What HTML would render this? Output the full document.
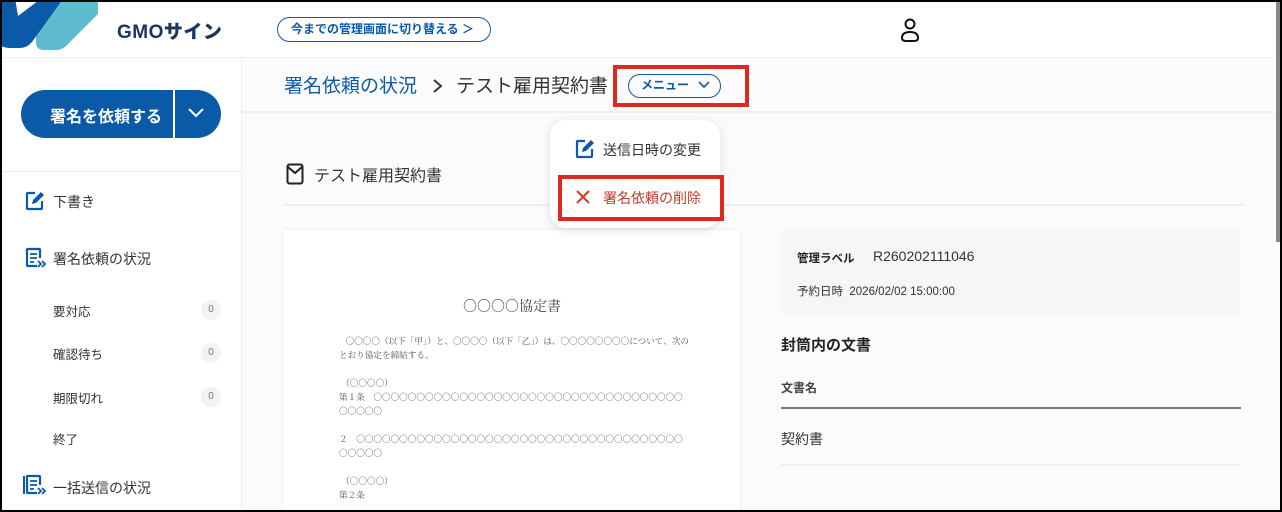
<!DOCTYPE html>
<html><head><meta charset="utf-8">
<style>
*{box-sizing:border-box;margin:0;padding:0}
body{width:1282px;height:512px;overflow:hidden;font-family:"Liberation Sans","Noto Sans CJK JP",sans-serif;background:#000;position:relative}
.frame{position:absolute;left:2px;top:2px;width:1278px;height:508px;background:#fbfbfd;overflow:hidden}
.hdr{position:absolute;left:0;top:0;width:1274px;height:56px;background:#fff;border-bottom:1px solid #f0f1f4}
.side{position:absolute;left:0;top:57px;width:240px;height:460px;background:#fff;border-right:1px solid #eceef2}
.abs{position:absolute}
.blue{color:#0b5aa8}
.pill{position:absolute;left:275px;top:15px;width:214px;height:25px;border:1.5px solid #0b5aa8;border-radius:13px;font-size:12px;color:#0b5aa8;font-weight:bold;line-height:22px;padding-left:13px}
.btn{position:absolute;left:19px;top:31px;width:200px;height:48px;background:#0b5aa8;border-radius:24px;color:#fff;font-weight:bold;font-size:16px}
.nav{position:absolute;font-size:14px;color:#333}
.sub{position:absolute;left:51px;font-size:12.5px;color:#333}
.cnt{position:absolute;left:199px;width:20px;height:20px;border-radius:10px;background:#f3f3f5;font-size:10px;color:#777;text-align:center;line-height:20px}
.bc{position:absolute;left:240px;top:57px;width:1034px;height:54px;border-bottom:2px solid #eef0f3;background:#fcfcfe}
.red{border:4px solid #e0291e;position:absolute}
.doc{font-family:"Noto Serif CJK JP","Noto Sans CJK JP",serif}
</style></head><body>
<div class="frame">
<div class="hdr">
 <svg class="abs" style="left:0;top:0" width="100" height="50" viewBox="0 0 100 50">
  <path d="M40 -10 L96 -10 L96 12 L64 44 Q60 48 54 48 L42 48 Q34 48 34 40 L34 0 Z" fill="#5fbbd0"/>
  <path d="M-5 -10 L12 -10 L16 14 L48 -10 L66 -10 L30 40 Q25 46 18 46 L8 46 Q-5 46 -5 34 Z" fill="#0b5aa8"/>
 </svg>
 <div class="abs" style="left:115px;top:15px;font-size:19px;font-weight:900;color:#1a3560;letter-spacing:0.5px">GMOサイン</div>
 <div class="pill">今までの管理画面に切り替える ＞</div>
 <svg class="abs" style="left:897px;top:15px" width="22" height="26" viewBox="0 0 22 26"><circle cx="11" cy="7" r="4.5" fill="none" stroke="#111" stroke-width="2"/><path d="M3 21 Q3 15 11 15 Q19 15 19 21 Q19 24 15 24 L7 24 Q3 24 3 21Z" fill="none" stroke="#111" stroke-width="2"/></svg>
</div>
<div class="side">
 <div class="btn"><span class="abs" style="left:29px;top:13px">署名を依頼する</span><div class="abs" style="left:152px;top:0;width:2px;height:48px;background:#fff"></div>
 <svg class="abs" style="left:166px;top:17px" width="18" height="12"><path d="M2 2 L9 9 L16 2" fill="none" stroke="#fff" stroke-width="2"/></svg></div>
 <div class="abs" style="left:0;top:112px;width:240px;height:1px;background:#eceef2"></div>
 <svg class="abs" style="left:22px;top:131px" width="22" height="22" viewBox="0 0 22 22"><path d="M11 3 H4 Q3 3 3 4 V18 Q3 19 4 19 H17 Q18 19 18 18 V11" fill="none" stroke="#0b5aa8" stroke-width="2.2"/><path d="M8 14 L9 10 L17 2 L20 5 L12 13 Z" fill="#0b5aa8"/></svg>
 <div class="nav" style="left:51px;top:133px">下書き</div>
 <svg class="abs" style="left:22px;top:187px" width="24" height="24" viewBox="0 0 24 24"><path d="M13 20 H4 Q3 20 3 19 V4 Q3 3 4 3 H15 Q16 3 16 4 V12" fill="none" stroke="#0b5aa8" stroke-width="2.2"/><path d="M6 8 H13 M6 12 H13 M6 16 H10 M14 15 L17 18 L14 21 M18 15 L21 18 L18 21" fill="none" stroke="#0b5aa8" stroke-width="1.8"/></svg>
 <div class="nav" style="left:51px;top:190px">署名依頼の状況</div>
 <div class="sub" style="top:242px">要対応</div><div class="cnt" style="top:241px">0</div>
 <div class="sub" style="top:285px">確認待ち</div><div class="cnt" style="top:284px">0</div>
 <div class="sub" style="top:329px">期限切れ</div><div class="cnt" style="top:328px">0</div>
 <div class="sub" style="top:370px">終了</div>
 <svg class="abs" style="left:20px;top:414px" width="26" height="24" viewBox="0 0 26 24"><path d="M2 3 V21" stroke="#0b5aa8" stroke-width="2"/><path d="M15 20 H6 Q5 20 5 19 V4 Q5 3 6 3 H17 Q18 3 18 4 V12" fill="none" stroke="#0b5aa8" stroke-width="2.2"/><path d="M8 8 H15 M8 12 H15 M8 16 H12 M16 15 L19 18 L16 21 M20 15 L23 18 L20 21" fill="none" stroke="#0b5aa8" stroke-width="1.8"/></svg>
 <div class="nav" style="left:51px;top:419px">一括送信の状況</div>
</div>
<div class="bc">
 <div class="abs blue" style="left:42px;top:12px;font-size:19px">署名依頼の状況</div>
 <svg class="abs" style="left:190px;top:19px" width="12" height="16"><path d="M2 2 L9 8 L2 14" fill="none" stroke="#333" stroke-width="2"/></svg>
 <div class="abs" style="left:214px;top:12px;font-size:19px;color:#333">テスト雇用契約書</div>
 <div class="abs" style="left:386px;top:15px;width:93px;height:24px;border:1.5px solid #0b5aa8;border-radius:12px;color:#0b5aa8;font-size:12px;font-weight:bold;line-height:21px;padding-left:12px">メニュー <svg width="12" height="8" style="margin-left:6px"><path d="M1 1 L6 6 L11 1" fill="none" stroke="#0b5aa8" stroke-width="1.6"/></svg></div>
</div>
<div class="red" style="left:611px;top:63px;width:136px;height:42px"></div>
<svg class="abs" style="left:284px;top:161px" width="18" height="22" viewBox="0 0 18 22"><rect x="1.5" y="1.5" width="15" height="19" rx="2" fill="none" stroke="#222" stroke-width="2"/><path d="M2 4 L9 10 L16 4" fill="none" stroke="#222" stroke-width="2"/></svg>
<div class="abs" style="left:312px;top:160px;font-size:16px;color:#333">テスト雇用契約書</div>
<div class="abs" style="left:281px;top:202px;width:960px;height:2px;background:#eceef1"></div>
<div class="abs" style="left:281px;top:228px;width:457px;height:290px;background:#fff;box-shadow:0 0 4px rgba(0,0,0,.08)">
 <div class="abs doc" style="left:180px;top:66px;font-size:14px;color:#444">○○○○協定書</div>
 <div class="abs doc" style="left:56px;top:104px;font-size:8.6px;color:#555;line-height:14px;width:350px;word-break:break-all">&nbsp;&nbsp;&nbsp;○○○○（以下「甲」）と、○○○○（以下「乙」）は、○○○○○○○○について、次のとおり協定を締結する。<br><br>&nbsp;（○○○○）<br>第１条　○○○○○○○○○○○○○○○○○○○○○○○○○○○○○○○○○○○○○○○○○<br><br>２　○○○○○○○○○○○○○○○○○○○○○○○○○○○○○○○○○○○○○○○○○○○<br><br>&nbsp;（○○○○）<br>第２条</div>
</div>
<div class="abs" style="left:779px;top:227px;width:460px;height:86px;background:#f6f6f8;border-radius:8px">
 <div class="abs" style="left:16px;top:21px;font-size:11.5px;font-weight:bold;color:#222">管理ラベル</div>
 <div class="abs" style="left:92px;top:19px;font-size:14px;color:#333">R260202111046</div>
 <div class="abs" style="left:16px;top:54px;font-size:11.5px;color:#333">予約日時&nbsp;&nbsp;2026/02/02 15:00:00</div>
</div>
<div class="abs" style="left:779px;top:332px;font-size:15px;font-weight:bold;color:#222">封筒内の文書</div>
<div class="abs" style="left:779px;top:377px;font-size:12px;color:#444;font-weight:bold">文書名</div>
<div class="abs" style="left:779px;top:405px;width:460px;height:2px;background:#777"></div>
<div class="abs" style="left:779px;top:427px;font-size:14px;color:#333">契約書</div>
<div class="abs" style="left:779px;top:462px;width:460px;height:2px;background:#eeeff2"></div>
<div class="abs" style="left:548px;top:118px;width:170px;height:108px;background:#fff;border-radius:16px;box-shadow:0 2px 10px rgba(0,0,0,.12)"></div>
<svg class="abs" style="left:572px;top:136px" width="22" height="22" viewBox="0 0 22 22"><path d="M11 3 H4 Q3 3 3 4 V18 Q3 19 4 19 H17 Q18 19 18 18 V11" fill="none" stroke="#0b5aa8" stroke-width="2.2"/><path d="M8 14 L9 10 L17 2 L20 5 L12 13 Z" fill="#0b5aa8"/></svg>
<div class="abs" style="left:601px;top:138px;font-size:14px;color:#333">送信日時の変更</div>
<div class="red" style="left:556px;top:173px;width:166px;height:46px"></div>
<svg class="abs" style="left:573px;top:187px" width="16" height="16"><path d="M2 2 L14 14 M14 2 L2 14" stroke="#d0392b" stroke-width="2"/></svg>
<div class="abs" style="left:601px;top:186px;font-size:14px;color:#c0392b">署名依頼の削除</div>
<div class="abs" style="left:1274px;top:0;width:4px;height:240px;background:#888"></div>
</div>
</body></html>
